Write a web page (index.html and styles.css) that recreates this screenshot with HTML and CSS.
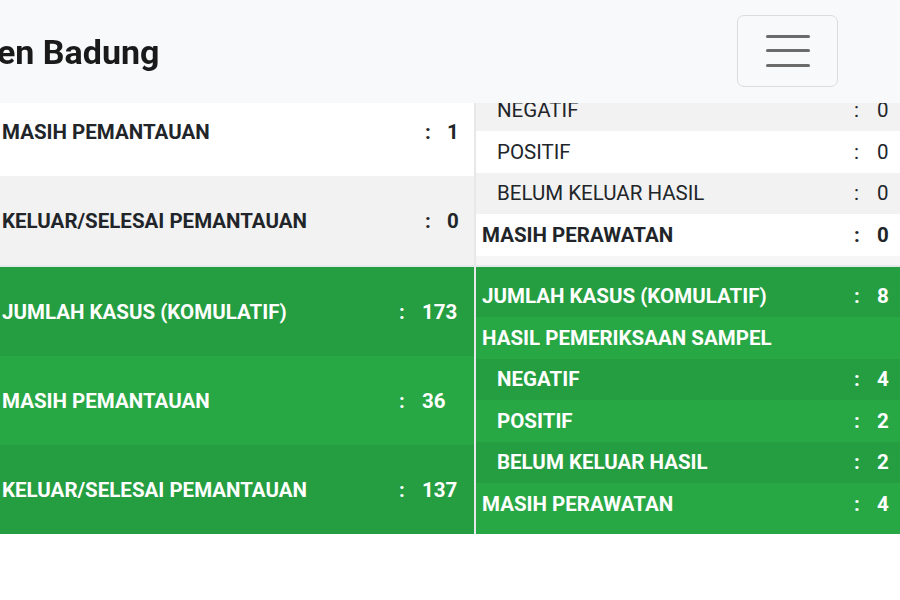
FILE: index.html
```html
<!DOCTYPE html>
<html lang="id">
<head>
<meta charset="utf-8">
<title>Kabupaten Badung</title>
<link rel="stylesheet" href="styles.css">
</head>
<body>
<header class="navbar">
  <h1 class="brand">en Badung</h1>
  <button class="toggler" aria-label="Menu">
    <span class="bar"></span><span class="bar"></span><span class="bar"></span>
  </button>
</header>
<main class="board">
  <section class="cell cell-light">
    <div class="ltable">
      <div class="lrow odd"><span class="label">JUMLAH KASUS (KOMULATIF)</span><span class="colon c-top">:</span><span class="val v-top">1</span></div>
      <div class="lrow"><span class="label">MASIH PEMANTAUAN</span><span class="colon c-top">:</span><span class="val v-top">1</span></div>
      <div class="lrow odd"><span class="label">KELUAR/SELESAI PEMANTAUAN</span><span class="colon c-top">:</span><span class="val v-top">0</span></div>
    </div>
  </section>
  <section class="cell cell-light rcell">
    <div class="rtable">
      <div class="rrow odd first"><span class="label">JUMLAH KASUS (KOMULATIF)</span><span class="colon">:</span><span class="val">0</span></div>
      <div class="rrow"><span class="label">HASIL PEMERIKSAAN SAMPEL</span></div>
      <div class="rrow odd sub"><span class="label">NEGATIF</span><span class="colon">:</span><span class="val">0</span></div>
      <div class="rrow sub"><span class="label">POSITIF</span><span class="colon">:</span><span class="val">0</span></div>
      <div class="rrow odd sub"><span class="label">BELUM KELUAR HASIL</span><span class="colon">:</span><span class="val">0</span></div>
      <div class="rrow"><span class="label">MASIH PERAWATAN</span><span class="colon">:</span><span class="val">0</span></div>
    </div>
  </section>
  <section class="cell cell-green">
    <div class="ltable">
      <div class="lrow odd"><span class="label">JUMLAH KASUS (KOMULATIF)</span><span class="colon c-green">:</span><span class="val v-green">173</span></div>
      <div class="lrow"><span class="label">MASIH PEMANTAUAN</span><span class="colon c-green">:</span><span class="val v-green">36</span></div>
      <div class="lrow odd"><span class="label">KELUAR/SELESAI PEMANTAUAN</span><span class="colon c-green">:</span><span class="val v-green">137</span></div>
    </div>
  </section>
  <section class="cell cell-green rcell">
    <div class="rtable">
      <div class="rrow odd first"><span class="label">JUMLAH KASUS (KOMULATIF)</span><span class="colon">:</span><span class="val">8</span></div>
      <div class="rrow"><span class="label">HASIL PEMERIKSAAN SAMPEL</span></div>
      <div class="rrow odd sub"><span class="label">NEGATIF</span><span class="colon">:</span><span class="val">4</span></div>
      <div class="rrow sub"><span class="label">POSITIF</span><span class="colon">:</span><span class="val">2</span></div>
      <div class="rrow odd sub"><span class="label">BELUM KELUAR HASIL</span><span class="colon">:</span><span class="val">2</span></div>
      <div class="rrow"><span class="label">MASIH PERAWATAN</span><span class="colon">:</span><span class="val">4</span></div>
    </div>
  </section>
</main>
</body>
</html>
```
FILE: styles.css
```css
* { box-sizing: border-box; }
html, body { margin: 0; padding: 0; }
body {
  font-family: Roboto, "Liberation Sans", Arial, sans-serif;
  color: #212529;
  background: #ffffff;
  width: 900px;
  height: 600px;
  overflow: hidden;
}
.navbar {
  position: fixed;
  top: 0;
  left: 0;
  width: 900px;
  height: 103px;
  background: #f8f9fa;
  z-index: 10;
  display: flex;
  align-items: center;
  justify-content: space-between;
  padding: 0 62px 0 0;
}
.brand {
  margin: 0 0 0 -3px;
  font-size: 34px;
  font-weight: 700;
  color: #1a1a1a;
  line-height: 1;
}
.toggler {
  width: 101px;
  height: 72px;
  margin-top: -2px;
  border: 1.5px solid #dcdcdc;
  border-radius: 7px;
  background: transparent;
  display: flex;
  flex-direction: column;
  align-items: center;
  justify-content: center;
  gap: 11.5px;
  padding: 0;
}
.bar {
  display: block;
  width: 44px;
  height: 3px;
  border-radius: 2px;
  background: #6b6b6b;
}
.board {
  margin-top: -2px;
  display: grid;
  grid-template-columns: 474px 424px;
  grid-template-rows: 267px 267px;
  gap: 2px;
  background: #e6e8ea;
  width: 900px;
}
.cell { overflow: hidden; }
.cell-light { background: #ffffff; }
.cell-light.rcell { background: #f6f6f6; }
.cell-green { background: #28a745; color: #ffffff; }

.ltable { display: flex; flex-direction: column; }
.lrow {
  height: 89px;
  display: flex;
  align-items: center;
  padding-left: 2px;
  font-size: 20.5px;
  font-weight: 700;
}
.cell-light .lrow { background: #ffffff; }
.cell-light .lrow.odd { background: #f2f2f2; }
.cell-green .lrow.odd { background: rgba(0, 0, 0, 0.05); }
.label { flex: 1; white-space: nowrap; }
.colon { flex: none; }
.val { flex: none; }
.c-top { width: 22px; }
.v-top { width: 27px; }
.c-green { width: 23px; }
.v-green { width: 52px; }

.rtable { display: flex; flex-direction: column; }
.rrow {
  height: 41.5px;
  display: flex;
  align-items: center;
  padding-left: 6px;
  font-size: 20.5px;
  font-weight: 700;
}
.rrow.first { height: 50px; padding-top: 8.5px; }
.rrow .colon { width: 23px; }
.rrow .val { width: 23px; }
.rrow.sub { padding-left: 21px; }
.cell-light .rrow { background: #ffffff; }
.cell-light .rrow.odd { background: #f2f2f2; }
.cell-light .rrow.sub { font-weight: 400; }
.cell-green .rrow.odd { background: rgba(0, 0, 0, 0.05); }
```
